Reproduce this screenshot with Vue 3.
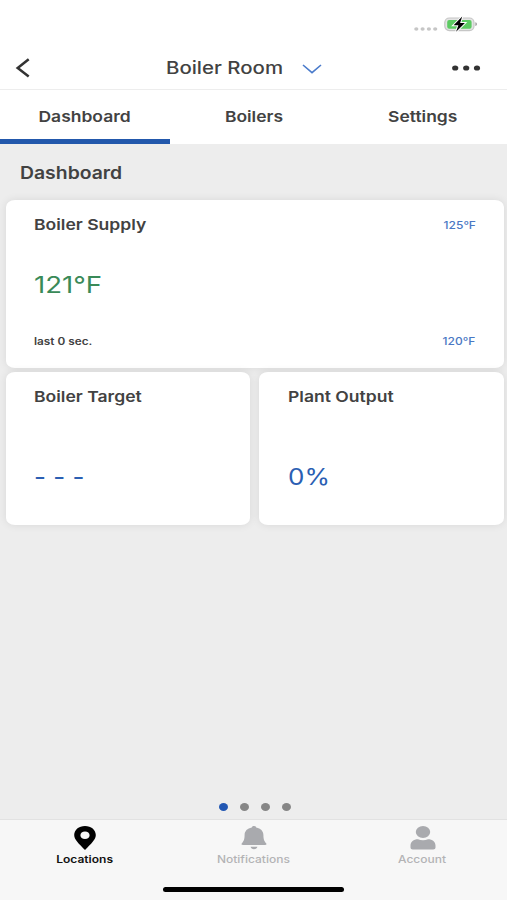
<template>
  <div class="app">
    <div class="status-bar">
      <svg class="signal" width="24" height="6" viewBox="0 0 24 6">
        <ellipse v-for="x in [2.3, 8.6, 14.9, 21.2]" :key="x" :cx="x" cy="3" rx="2.1" ry="1.7" fill="#c6c6c6" />
      </svg>
      <svg class="battery" width="34" height="18" viewBox="0 0 34 18">
        <rect x="0.8" y="3" width="29.2" height="12.6" rx="4.5" fill="#e4e4e4" stroke="#c6c6c6" stroke-width="1.2" />
        <rect x="3.2" y="4.9" width="24.4" height="8.9" rx="2" fill="#5ccb62" />
        <path d="M31.4 7.300c2 .5 2 3.300 0 3.800z" fill="#999" />
        <path d="M18.200 1.600 9.600 10.200h4.800l-2.300 6.600 8.800-8.900h-4.800z" fill="#000" stroke="#fff" stroke-width="2" paint-order="stroke" />
      </svg>
    </div>

    <header class="header">
      <svg class="back" width="16" height="20" viewBox="0 0 16 20">
        <path d="M13.700 1.200 2.700 10l11 8.500" fill="none" stroke="#333" stroke-width="2.500" />
      </svg>
      <div class="title">
        <span class="wide title-text">Boiler Room</span>
        <svg width="20" height="10" viewBox="0 0 20 10">
          <path d="M1 1l9 7.600L19 1" fill="none" stroke="#4a7bcb" stroke-width="1.600" />
        </svg>
      </div>
      <svg class="more" width="30" height="6" viewBox="0 0 30 6">
        <ellipse v-for="x in [4.2, 15.2, 26]" :key="x" :cx="x" cy="3" rx="3.1" ry="2.6" fill="#333" />
      </svg>
    </header>

    <nav class="tabs">
      <div v-for="tab in tabs" :key="tab" class="tab" :class="{ active: tab === activeTab }" @click="activeTab = tab">
        <span class="wide">{{ tab }}</span>
      </div>
    </nav>

    <main class="content">
      <h2 class="section-title"><span class="wide">Dashboard</span></h2>
      <div class="cards">
        <section class="card supply">
          <div class="row">
            <span class="wide card-title">Boiler Supply</span>
            <span class="wide limit">125°F</span>
          </div>
          <span class="wide value green">121°F</span>
          <div class="row bottom">
            <span class="wide updated">last 0 sec.</span>
            <span class="wide limit">120°F</span>
          </div>
        </section>
        <section v-for="card in cards" :key="card.title" class="card small">
          <span class="wide card-title">{{ card.title }}</span>
          <span class="wide value">{{ card.value ?? '- - -' }}</span>
        </section>
      </div>
      <div class="pager">
        <i v-for="n in 4" :key="n" :class="{ current: n === page }"></i>
      </div>
    </main>

    <footer class="tabbar">
      <div class="items">
        <div class="item selected">
          <svg width="24" height="26" viewBox="0 0 24 26">
            <path fill-rule="evenodd" d="M12 1C5.800 1 1.200 4.900 1.200 10c0 4.700 4.600 8.600 10.800 15 6.200-6.400 10.800-10.300 10.800-15C22.800 4.900 18.200 1 12 1zm0 5.400c2.700 0 4.600 1.700 4.600 3.800S14.700 14 12 14s-4.600-1.700-4.600-3.800S9.300 6.400 12 6.400z" fill="#000" />
          </svg>
          <span class="wide">Locations</span>
        </div>
        <div class="item">
          <svg width="26" height="26" viewBox="0 0 26 26">
            <path d="M13 1c-1.300 0-2.200.7-2.200 1.600C6.300 3.400 3.700 6.300 3.600 10c-.1 4.500-.7 6-2.700 8.200-.8.900-.3 1.800.8 1.800h22.600c1.100 0 1.600-.9.800-1.800-2-2.200-2.600-3.700-2.700-8.200-.1-3.700-2.700-6.600-7.200-7.400C15.200 1.700 14.300 1 13 1zM9.600 21.700h6.800c-.3 1.600-1.600 2.500-3.400 2.500s-3.100-.9-3.400-2.500z" fill="#a9aaae" />
          </svg>
          <span class="wide">Notifications</span>
        </div>
        <div class="item">
          <svg width="26" height="26" viewBox="0 0 26 26">
            <ellipse cx="13" cy="7" rx="7.200" ry="6" fill="#a9aaae" />
            <path d="M8 14.200c1.500.7 3.200 1.100 5 1.100s3.500-.4 5-1.100c4.500 0 7.500 2.600 7.500 6.300v2c0 1.200-.9 2-2.300 2H2.800c-1.400 0-2.300-.8-2.300-2v-2c0-3.700 3-6.300 7.500-6.300z" fill="#a9aaae" />
          </svg>
          <span class="wide">Account</span>
        </div>
      </div>
      <div class="home-indicator"></div>
    </footer>
  </div>
</template>

<script setup>
import { ref } from 'vue'

const tabs = ['Dashboard', 'Boilers', 'Settings']
const activeTab = ref('Dashboard')
const page = ref(1)

const cards = [
  { title: 'Boiler Target', value: null },
  { title: 'Plant Output', value: '0%' }
]
</script>

<style>
body {
  margin: 0;
}
</style>

<style scoped>
.app {
  height: 900px;
  display: flex;
  flex-direction: column;
  overflow: hidden;
  background: #fff;
  color: #424242;
  font-family: Inter, "Liberation Sans", sans-serif;
}
svg {
  display: block;
  flex: none;
}
.wide {
  display: inline-block;
  white-space: nowrap;
  transform: scaleX(1.2);
  transform-origin: left center;
}
.status-bar {
  height: 48px;
  box-sizing: border-box;
  padding: 15px 29px 0 0;
  display: flex;
  justify-content: flex-end;
}
.signal {
  margin: 11px 6px 0 0;
}
.header {
  height: 42px;
  box-sizing: border-box;
  padding: 0 26px 2px 15px;
  display: grid;
  grid-template-columns: 1fr auto 1fr;
  align-items: center;
  border-bottom: 1px solid #ededed;
}
.more {
  justify-self: end;
}
.title {
  display: flex;
  align-items: center;
  gap: 19px;
  margin-right: 8px;
}
.title-text {
  width: 117px;
  font-size: 17px;
  font-weight: 500;
  line-height: 20px;
}
.title svg {
  margin-top: 2px;
}
.tabs {
  height: 54px;
  display: grid;
  grid-template-columns: 170px 168px 169px;
}
.tab {
  box-sizing: border-box;
  padding-top: 17px;
  text-align: center;
  font-size: 15px;
  font-weight: 600;
  line-height: 20px;
}
.tab .wide {
  transform: scaleX(1.165);
  transform-origin: center;
}
.tab.active {
  border-bottom: 5px solid #2258ac;
}
.content {
  flex: 1;
  display: flex;
  flex-direction: column;
  background: #ededed;
}
.section-title {
  margin: 0;
  height: 56px;
  padding: 17px 20px 0;
  box-sizing: border-box;
  font-size: 17px;
  font-weight: 600;
  line-height: 24px;
}
.section-title .wide {
  transform: scaleX(1.14);
}
.cards {
  display: grid;
  grid-template-columns: 1fr 1fr;
  gap: 4px 9px;
  padding: 0 3.5px 0 5.5px;
}
.card {
  box-sizing: border-box;
  display: flex;
  flex-direction: column;
  align-items: flex-start;
  background: #fff;
  border-radius: 9px / 7px;
  box-shadow: 0 0 9px rgba(0, 0, 0, 0.09);
  padding: 15px 28.5px 0;
}
.supply {
  grid-column: 1 / 3;
  height: 168px;
  padding-right: 28px;
}
.small {
  height: 153px;
}
.row {
  width: 100%;
  display: flex;
  align-items: center;
  justify-content: space-between;
}
.card-title {
  font-size: 15px;
  font-weight: 600;
  line-height: 20px;
  transform: scaleX(1.17);
}
.limit {
  color: #4a78c4;
  font-size: 10px;
  font-weight: 500;
  line-height: 14px;
  transform-origin: right center;
}
.value {
  color: #2b5fb3;
  font-size: 23px;
  line-height: 30px;
}
.green {
  margin-top: 35px;
  color: #3a8a58;
}
.bottom {
  margin-top: 34px;
}
.updated {
  font-size: 10px;
  font-weight: 600;
  line-height: 14px;
  transform: scaleX(1.18);
}
.small .value {
  margin-top: 55px;
  transform: scaleX(1.13);
}
.pager {
  margin: auto 0 8px;
  padding-left: 2px;
  display: flex;
  justify-content: center;
  gap: 12px;
}
.pager i {
  width: 9px;
  height: 8px;
  border-radius: 50%;
  background: #868686;
}
.pager .current {
  background: #2257b3;
}
.tabbar {
  height: 81px;
  box-sizing: border-box;
  border-top: 1px solid #e2e2e2;
  background: #f7f7f7;
  display: flex;
  flex-direction: column;
  align-items: center;
}
.items {
  width: 100%;
  height: 67px;
  display: grid;
  grid-template-columns: 1fr 1fr 1fr;
}
.item {
  display: flex;
  flex-direction: column;
  align-items: center;
  padding-top: 5px;
  color: #b3b3b5;
  font-size: 10px;
  font-weight: 500;
  line-height: 14px;
}
.item .wide {
  margin-top: 1px;
  transform-origin: center;
}
.item.selected {
  color: #111;
  font-weight: 600;
}
.home-indicator {
  width: 181px;
  height: 5px;
  border-radius: 3px;
  background: #000;
}
</style>
